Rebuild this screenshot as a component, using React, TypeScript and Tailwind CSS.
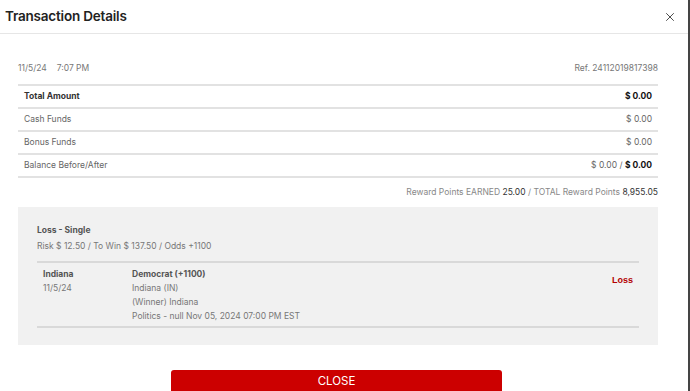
import React from "react";
import { X } from "lucide-react";

const rows = [
  { label: "Total Amount", value: "$ 0.00", bold: true },
  { label: "Cash Funds", value: "$ 0.00" },
  { label: "Bonus Funds", value: "$ 0.00" },
];

const legLines = [
  "Indiana (IN)",
  "(Winner) Indiana",
  "Politics - null Nov 05, 2024 07:00 PM EST",
];

const App = () => (
  <div className="flex h-[391px] w-[690px] overflow-hidden bg-white font-['Inter',sans-serif]">
    <div className="w-[688px] shrink-0">
      <header className="flex h-[34px] items-center justify-between border-b border-[#e6e6e6] pl-[5px] pr-[11px]">
        <h1 className="text-[13.5px] font-semibold tracking-[-0.2px] text-[#222]">
          Transaction Details
        </h1>
        <X className="h-[14px] w-[14px] text-[#333]" strokeWidth={1.5} />
      </header>

      <div className="px-[18px] pr-[30px]">
        <div className="flex h-[50px] items-end justify-between pb-[9px] text-[8.5px] text-[#777]">
          <span>
            11/5/24<span className="ml-[10px]">7:07 PM</span>
          </span>
          <span>Ref. 24112019817398</span>
        </div>

        <div className="border-t-2 border-[#e2e2e2] text-[8.5px]">
          {rows.map((r) => (
            <div
              key={r.label}
              className={`flex h-[23px] items-center justify-between border-b-2 border-[#e2e2e2] px-[6px] ${
                r.bold ? "font-bold text-[#333]" : "text-[#666]"
              }`}
            >
              <span>{r.label}</span>
              <span className={r.bold ? "text-[#111]" : ""}>{r.value}</span>
            </div>
          ))}
          <div className="flex h-[23px] items-center justify-between border-b-2 border-[#e2e2e2] px-[6px] text-[#666]">
            <span>Balance Before/After</span>
            <span>
              $ 0.00 / <span className="font-bold text-[#111]">$ 0.00</span>
            </span>
          </div>
        </div>

        <div className="flex h-[29px] items-center justify-end text-[8.5px] text-[#888]">
          Reward Points EARNED&nbsp;<span className="text-[#333]">25.00</span>&nbsp;/&nbsp;TOTAL Reward Points&nbsp;
          <span className="text-[#333]">8,955.05</span>
        </div>

        <section className="h-[138px] bg-[#f1f1f1] px-[19px] pt-[17px]">
          <div className="text-[8.5px] font-bold text-[#555]">Loss - Single</div>
          <div className="mt-[3px] text-[8.5px] text-[#777]">
            Risk $ 12.50 / To Win $ 137.50 / Odds +1100
          </div>
          <div className="mt-[8px] flex border-y-2 border-[#d9d9d9] pb-[3px] pl-[6px] pr-[6px] pt-[4px] text-[8.5px] text-[#777]">
            <div className="w-[89px] leading-[14px]">
              <div className="font-bold text-[#555]">Indiana</div>
              <div>11/5/24</div>
            </div>
            <div className="flex-1 leading-[14px]">
              <div className="font-bold text-[#555]">Democrat (+1100)</div>
              {legLines.map((l) => (
                <div key={l}>{l}</div>
              ))}
            </div>
            <div className="pt-[7px] font-['Liberation_Sans',sans-serif] text-[9px] font-bold text-[#b30000]">
              Loss
            </div>
          </div>
        </section>
      </div>

      <div className="mt-[25px] flex justify-center pr-[15px]">
        <button className="h-[30px] w-[331px] rounded-t-[3px] bg-[#cc0000] pb-[6px] text-[11.5px] text-white">
          CLOSE
        </button>
      </div>
    </div>
    <div className="w-[2px] bg-[#444]" />
  </div>
);

export default App;
